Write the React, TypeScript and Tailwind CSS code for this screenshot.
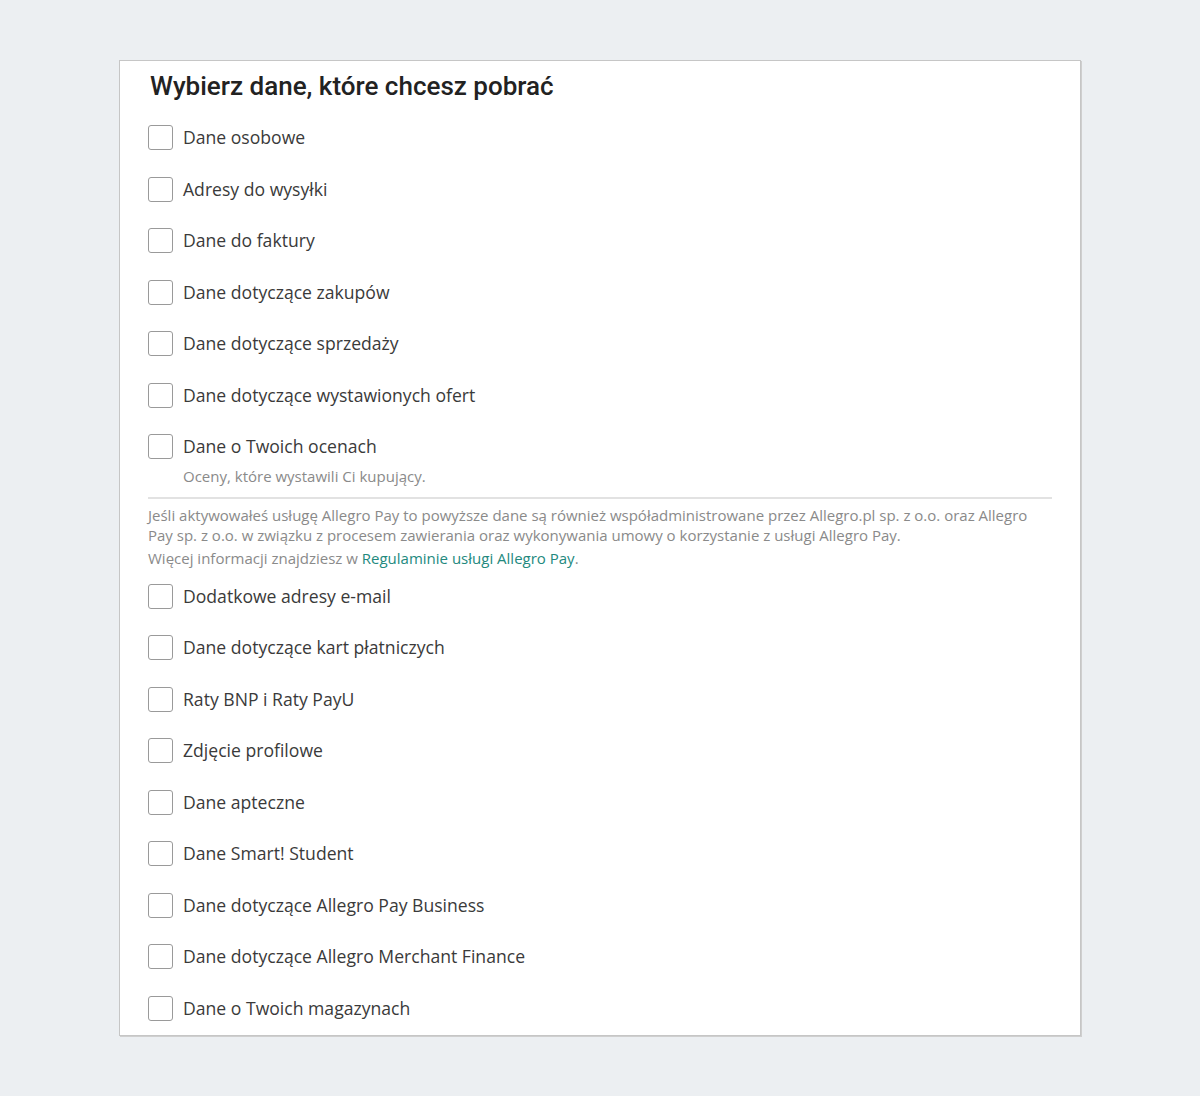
import React from "react";

const groupA = [
  "Dane osobowe",
  "Adresy do wysyłki",
  "Dane do faktury",
  "Dane dotyczące zakupów",
  "Dane dotyczące sprzedaży",
  "Dane dotyczące wystawionych ofert",
];

const groupB = [
  "Dodatkowe adresy e-mail",
  "Dane dotyczące kart płatniczych",
  "Raty BNP i Raty PayU",
  "Zdjęcie profilowe",
  "Dane apteczne",
  "Dane Smart! Student",
  "Dane dotyczące Allegro Pay Business",
  "Dane dotyczące Allegro Merchant Finance",
  "Dane o Twoich magazynach",
];

function Row({ label }: { label: string }) {
  return (
    <label className="flex items-center h-[27px] cursor-pointer">
      <span className="w-[25px] h-[25px] shrink-0 rounded-[3px] border border-[#9a9a9a] bg-white" />
      <span className="ml-[10px] text-[17.6px] leading-[27px] text-[#3a3a3a]">{label}</span>
    </label>
  );
}

export default function App() {
  return (
    <div
      className="min-h-[1096px] w-full bg-[#eceff2] pt-[60px]"
      style={{ fontFamily: '"Open Sans", "Liberation Sans", sans-serif' }}
    >
      <div className="ml-[119px] w-[962px] h-[976px] bg-white border border-[#c6c6c6] shadow-[1px_1px_0_#cfcfcf] px-[28px] pt-[9px]">
        <h1
          className="text-[26px] leading-[32px] font-medium text-[#222] pl-[2px]"
          style={{ fontFamily: "Roboto, 'Liberation Sans', sans-serif" }}
        >
          Wybierz dane, które chcesz pobrać
        </h1>
        <div className="mt-[22px] flex flex-col gap-[24.5px]">
          {groupA.map((l) => (
            <Row key={l} label={l} />
          ))}
          <div>
            <Row label="Dane o Twoich ocenach" />
            <p className="mt-[5.5px] pl-[35px] text-[15px] leading-[20px] text-[#8a8a8a]">
              Oceny, które wystawili Ci kupujący.
            </p>
          </div>
        </div>
        <div className="mt-[11px] h-[2px] bg-[#e2e2e2]" />
        <p className="mt-[6px] pr-[20px] text-[15px] leading-[20px] text-[#8a8a8a]">
          Jeśli aktywowałeś usługę Allegro Pay to powyższe dane są również współadministrowane przez Allegro.pl sp. z o.o. oraz Allegro Pay sp. z o.o. w związku z procesem zawierania oraz wykonywania umowy o korzystanie z usługi Allegro Pay.
        </p>
        <p className="mt-[3px] text-[15px] leading-[20px] text-[#8a8a8a]">
          Więcej informacji znajdziesz w{" "}
          <a className="text-[#23897e]" href="#">
            Regulaminie usługi Allegro Pay
          </a>
          .
        </p>
        <div className="mt-[15px] flex flex-col gap-[24.5px]">
          {groupB.map((l) => (
            <Row key={l} label={l} />
          ))}
        </div>
      </div>
    </div>
  );
}
